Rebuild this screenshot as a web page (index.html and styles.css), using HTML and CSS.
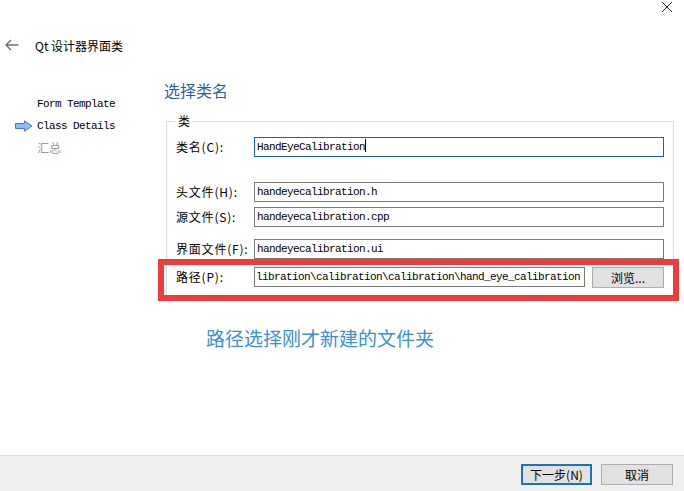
FILE: index.html
```html
<!DOCTYPE html>
<html lang="zh">
<head>
<meta charset="utf-8">
<title>Qt 设计器界面类</title>
<link rel="stylesheet" href="styles.css">
</head>
<body>
<div class="window">
  <div class="titlebar">
    <svg class="close" width="12" height="12" viewBox="0 0 12 12"><path d="M1 1 L11 11 M11 1 L1 11" stroke="#222" stroke-width="1" fill="none"/></svg>
  </div>
  <div class="header">
    <svg class="back" width="14" height="12" viewBox="0 0 14 12"><path d="M13.5 6 H1 M6 1 L1 6 L6 11" stroke="#707070" stroke-width="1.4" fill="none"/></svg>
    <span class="title">Qt 设计器界面类</span>
  </div>
  <div class="body">
    <nav class="steps">
      <div class="step">Form Template</div>
      <div class="step current">
        <svg class="cur-icon" width="18" height="12" viewBox="0 0 18 12"><path d="M0.5 3.5 H9.5 V0.8 L17 6 L9.5 11.2 V8.5 H0.5 Z" fill="#8dbdf0" stroke="#3f7bd0" stroke-width="1"/></svg>
        Class Details
      </div>
      <div class="step disabled">汇总</div>
    </nav>
    <main class="content">
      <h1 class="heading">选择类名</h1>
      <div class="group">
        <span class="legend">类</span>
        <div class="row r1">
          <label class="lbl">类名(C):</label>
          <div class="field focused">HandEyeCalibration<span class="caret"></span></div>
        </div>
        <div class="row r2">
          <label class="lbl">头文件(H):</label>
          <div class="field">handeyecalibration.h</div>
        </div>
        <div class="row r3">
          <label class="lbl">源文件(S):</label>
          <div class="field">handeyecalibration.cpp</div>
        </div>
        <div class="row r4">
          <label class="lbl">界面文件(F):</label>
          <div class="field">handeyecalibration.ui</div>
        </div>
        <div class="row r5">
          <label class="lbl">路径(P):</label>
          <div class="field path">libration\calibration\calibration\hand_eye_calibration</div>
          <button class="btn browse">浏览...</button>
        </div>
        <div class="mark"></div>
      </div>
      <p class="note">路径选择刚才新建的文件夹</p>
    </main>
  </div>
  <div class="footer">
    <button class="btn primary">下一步(N)</button>
    <button class="btn">取消</button>
  </div>
</div>
</body>
</html>
```

FILE: styles.css
```css
html, body {
  margin: 0;
  padding: 0;
  background: #ffffff;
}
.window {
  width: 684px;
  height: 491px;
  display: flex;
  flex-direction: column;
  font-family: "Noto Sans CJK SC", "Noto Sans", sans-serif;
  color: #000;
  overflow: hidden;
}
.titlebar {
  height: 22px;
  display: flex;
  justify-content: flex-end;
  align-items: flex-start;
}
.close {
  margin-top: 1px;
  margin-right: 11px;
}
.header {
  height: 48px;
  display: flex;
  align-items: center;
  padding-left: 5px;
}
.back {
  margin-top: -2px;
}
.title {
  margin-left: 16px;
  font-size: 12px;
  line-height: 16px;
}
.body {
  flex: 1;
  display: flex;
}
.steps {
  width: 164px;
  flex: none;
  padding-top: 23px;
  box-sizing: border-box;
}
.step {
  height: 22px;
  line-height: 22px;
  padding-left: 37px;
  font-family: "Liberation Mono", monospace;
  font-size: 11px;
  letter-spacing: -0.6px;
  color: #000;
  position: relative;
}
.step.disabled {
  font-family: "Noto Sans CJK SC", sans-serif;
  font-size: 12px;
  letter-spacing: 0;
  color: #9a9a9a;
}
.cur-icon {
  position: absolute;
  left: 15px;
  top: 5px;
}
.content {
  flex: 1;
  padding-right: 10px;
}
.heading {
  margin: 8px 0 0 0;
  height: 24px;
  line-height: 24px;
  font-size: 16px;
  font-weight: normal;
  color: #2a5ea8;
}
.group {
  position: relative;
  margin: 19px 0 0 2px;
  width: 508px;
  box-sizing: border-box;
  border: 1px solid #dcdcdc;
  padding: 15px 9px 9px 9px;
}
.legend {
  position: absolute;
  left: 8px;
  top: -9px;
  background: #fff;
  padding: 0 3px;
  font-size: 12px;
  line-height: 16px;
}
.row {
  display: flex;
  align-items: center;
  height: 20px;
}
.r2 { margin-top: 25px; }
.r3 { margin-top: 5px; }
.r4 { margin-top: 12px; }
.r5 { margin-top: 8px; }
.lbl {
  width: 78px;
  flex: none;
  font-size: 12px;
  letter-spacing: 0.8px;
  line-height: 20px;
  white-space: nowrap;
}
.field {
  width: 411px;
  height: 20px;
  box-sizing: border-box;
  border: 1px solid #7a7a7a;
  padding-left: 2px;
  font-family: "Liberation Mono", monospace;
  font-size: 11px;
  letter-spacing: -0.6px;
  line-height: 18px;
  white-space: nowrap;
  overflow: hidden;
}
.field.focused {
  border-color: #1464ae;
}
.caret {
  display: inline-block;
  width: 1px;
  height: 13px;
  background: #000;
  vertical-align: -2px;
}
.field.path {
  width: 331px;
  padding-left: 1px;
}
.btn {
  height: 21px;
  width: 72px;
  box-sizing: border-box;
  border: 1px solid #adadad;
  background: #e1e1e1;
  font-family: "Noto Sans CJK SC", sans-serif;
  font-size: 12px;
  line-height: 17px;
  padding: 0;
  color: #000;
}
.browse {
  margin-left: 7px;
  width: 72px;
}
.mark {
  position: absolute;
  left: -9px;
  top: 137px;
  width: 521px;
  height: 42px;
  box-sizing: border-box;
  border: 6px solid #ef3b3b;
}
.note {
  margin: 29px 0 0 42px;
  font-size: 19px;
  line-height: 24px;
  color: #3b8fd8;
}
.footer {
  height: 36px;
  box-sizing: border-box;
  background: #f0f0f0;
  border-top: 1px solid #dfdfdf;
  display: flex;
  justify-content: flex-end;
  align-items: flex-start;
  padding: 8px 11px 0 0;
  gap: 9px;
}
.primary {
  width: 71px;
  border: 2px solid #1a72c6;
}
```
